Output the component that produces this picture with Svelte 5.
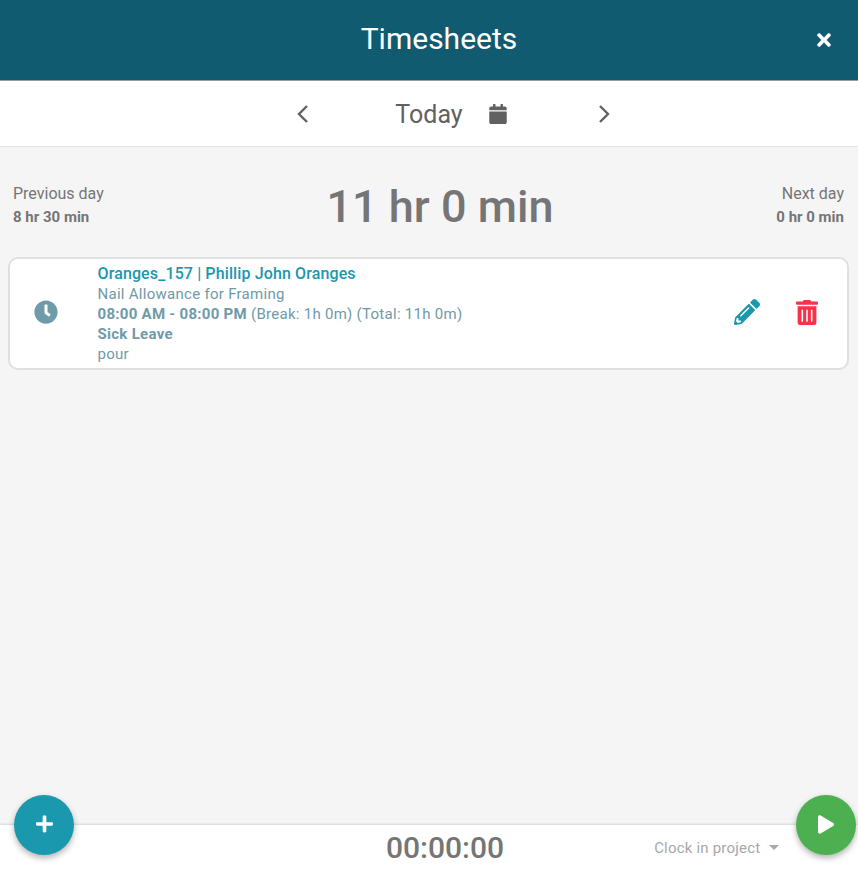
<script>
	let entry = {
		title: 'Oranges_157 | Phillip John Oranges',
		task: 'Nail Allowance for Framing',
		hours: '08:00 AM - 08:00 PM',
		extra: '(Break: 1h 0m) (Total: 11h 0m)',
		type: 'Sick Leave',
		note: 'pour'
	};
</script>

<div class="page">
	<header class="top">
		<h1>Timesheets</h1>
		<button class="close" aria-label="Close">
			<svg viewBox="0 0 352 512" width="14" height="20"><path fill="#fff" d="M242.72 256l100.07-100.07c12.28-12.28 12.28-32.19 0-44.48l-22.24-22.24c-12.28-12.28-32.19-12.28-44.48 0L176 189.28 75.93 89.21c-12.28-12.28-32.19-12.28-44.48 0L9.21 111.45c-12.28 12.28-12.28 32.19 0 44.48L109.28 256 9.21 356.07c-12.28 12.28-12.28 32.19 0 44.48l22.24 22.24c12.28 12.28 32.2 12.28 44.48 0L176 322.72l100.07 100.07c12.28 12.28 32.2 12.28 44.48 0l22.24-22.24c12.28-12.28 12.28-32.19 0-44.48L242.72 256z"/></svg>
		</button>
	</header>

	<nav class="dates">
		<svg class="chev" viewBox="0 0 14 22" width="14" height="22"><polyline points="11,3 3,11 11,19" /></svg>
		<div class="today">
			<span>Today</span>
			<svg viewBox="0 0 448 512" width="18" height="20"><path fill="#616161" d="M12 192h424c6.6 0 12 5.4 12 12v260c0 26.5-21.5 48-48 48H48c-26.5 0-48-21.5-48-48V204c0-6.6 5.4-12 12-12zm436-44v-36c0-26.5-21.5-48-48-48h-48V12c0-6.6-5.4-12-12-12h-40c-6.6 0-12 5.4-12 12v52H160V12c0-6.6-5.4-12-12-12h-40c-6.6 0-12 5.4-12 12v52H48C21.5 64 0 85.5 0 112v36c0 6.6 5.4 12 12 12h424c6.6 0 12-5.4 12-12z"/></svg>
		</div>
		<svg class="chev" viewBox="0 0 14 22" width="14" height="22"><polyline points="3,3 11,11 3,19" /></svg>
	</nav>

	<main class="content">
		<section class="summary">
			<div class="side left">
				<div>Previous day</div>
				<strong>8 hr 30 min</strong>
			</div>
			<div class="total">11 hr 0 min</div>
			<div class="side right">
				<div>Next day</div>
				<strong>0 hr 0 min</strong>
			</div>
		</section>

		<article class="card">
			<div class="clock">
				<svg viewBox="0 0 512 512" width="24" height="24"><path fill="#6f9aa8" d="M256,8C119,8,8,119,8,256S119,504,256,504,504,393,504,256,393,8,256,8Zm92.49,313h0l-20,25a16,16,0,0,1-22.49,2.5h0l-67-49.72a40,40,0,0,1-15-31.23V112a16,16,0,0,1,16-16h32a16,16,0,0,1,16,16V256l58,42.5A16,16,0,0,1,348.49,321Z"/></svg>
			</div>
			<div class="info">
				<div class="title">{entry.title}</div>
				<div>{entry.task}</div>
				<div><b>{entry.hours}</b> {entry.extra}</div>
				<div><b>{entry.type}</b></div>
				<div>{entry.note}</div>
			</div>
			<div class="actions">
				<svg viewBox="0 0 512 512" width="26" height="26"><path fill="#1a98ae" d="M497.9 142.1l-46.1 46.1c-4.7 4.7-12.3 4.7-17 0l-111-111c-4.7-4.7-4.7-12.3 0-17l46.1-46.1c18.7-18.7 49.1-18.7 67.9 0l60.1 60.1c18.8 18.7 18.8 49.1 0 67.9zM284.2 99.8L21.6 362.4.4 483.9c-2.9 16.4 11.4 30.6 27.8 27.8l121.5-21.3 262.6-262.6c4.7-4.7 4.7-12.3 0-17l-111-111c-4.8-4.7-12.4-4.7-17.1 0zM124.1 339.9c-5.5-5.5-5.5-14.3 0-19.8l154-154c5.5-5.5 14.3-5.5 19.8 0s5.5 14.3 0 19.8l-154 154c-5.5 5.5-14.3 5.5-19.8 0zM88 424h48v36.3l-64.5 11.3-31.1-31.1L51.7 376H88v48z"/></svg>
				<svg viewBox="0 0 448 512" width="22" height="25"><path fill="#fb3149" d="M32 464a48 48 0 0 0 48 48h288a48 48 0 0 0 48-48V128H32zm272-256a16 16 0 0 1 32 0v224a16 16 0 0 1-32 0zm-96 0a16 16 0 0 1 32 0v224a16 16 0 0 1-32 0zm-96 0a16 16 0 0 1 32 0v224a16 16 0 0 1-32 0zM432 32H312l-9.4-18.7A24 24 0 0 0 281.1 0H166.8a23.72 23.72 0 0 0-21.4 13.3L136 32H16A16 16 0 0 0 0 48v32a16 16 0 0 0 16 16h416a16 16 0 0 0 16-16V48a16 16 0 0 0-16-16z"/></svg>
			</div>
		</article>
	</main>

	<footer class="bottom">
		<div class="timer">00:00:00</div>
		<div class="project">
			<span>Clock in project</span>
			<i class="caret"></i>
		</div>
	</footer>

	<button class="fab add" aria-label="Add">
		<svg viewBox="0 0 448 512" width="17" height="20"><path fill="#fff" d="M416 208H272V64c0-17.67-14.33-32-32-32h-32c-17.67 0-32 14.33-32 32v144H32c-17.67 0-32 14.33-32 32v32c0 17.67 14.33 32 32 32h144v144c0 17.67 14.33 32 32 32h32c17.67 0 32-14.33 32-32V304h144c17.67 0 32-14.33 32-32v-32c0-17.67-14.33-32-32-32z"/></svg>
	</button>
	<button class="fab play" aria-label="Clock in">
		<svg viewBox="0 0 448 512" width="16" height="19"><path fill="#fff" d="M424.4 214.7L72.4 6.6C43.8-10.3 0 6.1 0 47.9V464c0 37.5 40.7 60.1 72.4 41.3l352-208c31.4-18.5 31.5-64.1 0-82.6z"/></svg>
	</button>
</div>

<style>
	:global(body) {
		margin: 0;
		font-family: Roboto, sans-serif;
	}

	.page {
		position: relative;
		height: 869px;
		display: flex;
		flex-direction: column;
		background: #f5f5f5;
		overflow: hidden;
	}

	.top {
		flex: none;
		height: 81px;
		box-sizing: border-box;
		position: relative;
		display: flex;
		align-items: center;
		justify-content: center;
		padding: 0 0 3px 20px;
		background: #115b70;
		border-bottom: 1px solid #9a9a9a;
		z-index: 1;
	}

	h1 {
		margin: 0;
		font-size: 30px;
		font-weight: 400;
		color: #fff;
	}

	.close {
		position: absolute;
		right: 27px;
		top: 30px;
		padding: 0;
		border: 0;
		background: none;
		display: flex;
	}

	.dates {
		flex: none;
		height: 66px;
		box-sizing: border-box;
		display: flex;
		align-items: center;
		justify-content: center;
		gap: 85px;
		background: #fff;
		border-bottom: 1px solid #e2e2e2;
		padding-left: 49px;
	}

	.chev polyline {
		fill: none;
		stroke: #616161;
		stroke-width: 2.4;
	}

	.chev:last-child {
		margin-left: 5px;
	}

	.today {
		display: flex;
		align-items: center;
		gap: 26px;
		font-size: 25px;
		color: #616161;
	}

	.today span {
		padding-top: 2px;
	}

	.content {
		flex: 1;
		padding: 0 9px;
	}

	.summary {
		height: 110px;
		box-sizing: border-box;
		display: flex;
		align-items: center;
		justify-content: space-between;
		padding: 6px 5px 0 4px;
		color: #757575;
	}

	.side {
		width: 140px;
		font-size: 16px;
		line-height: 23px;
	}

	.side strong {
		font-size: 15px;
		font-weight: 700;
	}

	.left {
		width: 163px;
	}

	.right {
		text-align: right;
	}

	.total {
		padding-top: 2px;
		font-size: 45px;
		font-weight: 500;
		color: #757575;
	}

	.card {
		height: 113px;
		box-sizing: border-box;
		display: flex;
		align-items: center;
		margin-left: -1px;
		background: #fff;
		border: 2px solid #e0e0e0;
		border-radius: 10px;
	}

	.clock {
		width: 87.5px;
		padding: 0 0 4px 24px;
		box-sizing: border-box;
		display: flex;
	}

	.info {
		flex: 1;
		font-size: 15px;
		line-height: 20px;
		color: #6f9aa8;
		letter-spacing: 0.28px;
	}

	.title {
		color: #1a98ae;
		font-weight: 500;
		font-size: 16px;
		letter-spacing: 0.12px;
	}

	.actions {
		display: flex;
		align-items: center;
		gap: 36px;
		padding-right: 29px;
		padding-bottom: 3px;
	}

	.bottom {
		flex: none;
		height: 44px;
		display: flex;
		align-items: center;
		background: #fff;
		box-shadow: 0 -1px 2px rgba(0, 0, 0, 0.12);
		position: relative;
	}

	.timer {
		margin-left: 386px;
		font-size: 30px;
		font-weight: 500;
		color: #757575;
	}

	.project {
		margin-left: 150px;
		display: flex;
		align-items: center;
		gap: 9px;
		padding-top: 1px;
		font-size: 15px;
		letter-spacing: 0.2px;
		color: #a8a8a8;
	}

	.caret {
		width: 0;
		height: 0;
		border-left: 5.5px solid transparent;
		border-right: 5.5px solid transparent;
		border-top: 5px solid #a8a8a8;
	}

	.fab {
		position: absolute;
		top: 795px;
		width: 60px;
		height: 60px;
		padding: 0 0 2px;
		border: 0;
		border-radius: 50%;
		display: flex;
		align-items: center;
		justify-content: center;
		box-shadow: 0 3px 6px rgba(0, 0, 0, 0.3);
		z-index: 2;
	}

	.add {
		left: 14px;
		background: #1a98ae;
	}

	.play {
		left: 796px;
		background: #4caf50;
	}
</style>
